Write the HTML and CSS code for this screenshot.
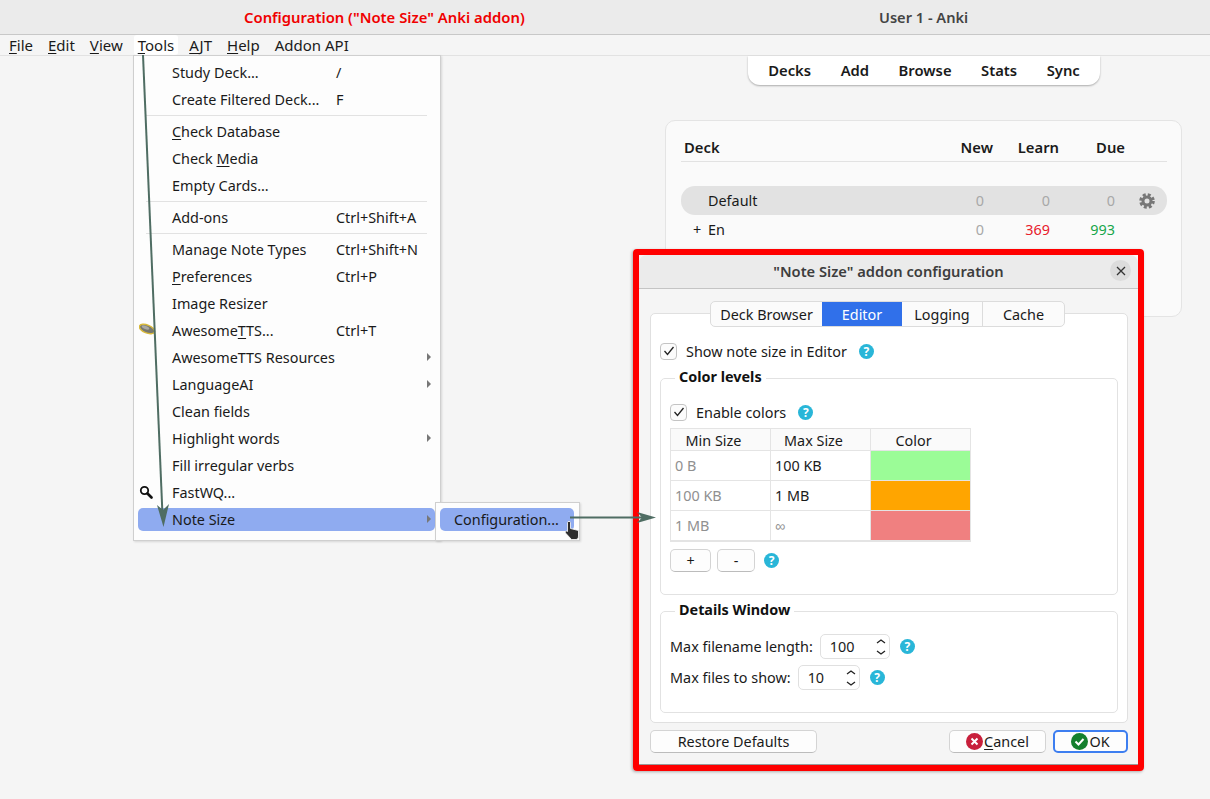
FILE: index.html
```html
<!DOCTYPE html>
<html lang="en">
<head>
    <meta charset="UTF-8">
    <title>User 1 - Anki</title>
    <link rel="stylesheet" href="styles.css">
</head>
<body>
    <header class="titlebar">
        <span class="note-title">Configuration ("Note Size" Anki addon)</span>
        <span class="app-title">User 1 - Anki</span>
    </header>
    <nav class="menubar">
        <span class="menubar-item"><u>F</u>ile</span>
        <span class="menubar-item"><u>E</u>dit</span>
        <span class="menubar-item"><u>V</u>iew</span>
        <span class="menubar-item active"><u>T</u>ools</span>
        <span class="menubar-item"><u>A</u>JT</span>
        <span class="menubar-item"><u>H</u>elp</span>
        <span class="menubar-item">Addon API</span>
    </nav>
    <main class="anki">
        <div class="toolbar">
            <span>Decks</span>
            <span>Add</span>
            <span>Browse</span>
            <span>Stats</span>
            <span>Sync</span>
        </div>
        <section class="decks">
            <div class="deck-row deck-head">
                <span class="deck-name">Deck</span>
                <span class="col-new">New</span>
                <span class="col-learn">Learn</span>
                <span class="col-due">Due</span>
            </div>
            <div class="deck-row deck-current">
                <span class="deck-name indent">Default</span>
                <span class="num col-new">0</span>
                <span class="num col-learn">0</span>
                <span class="num col-due">0</span>
                <svg class="gear" width="16" height="16" viewBox="0 0 16 16">
                    <circle cx="8" cy="8" r="6.3" fill="none" stroke="#777" stroke-width="3" stroke-dasharray="2.9 2.05"/>
                    <circle cx="8" cy="8" r="4" fill="none" stroke="#777" stroke-width="3"/>
                </svg>
            </div>
            <div class="deck-row">
                <span class="deck-name"><span class="expander">+</span>En</span>
                <span class="num col-new">0</span>
                <span class="num col-learn red">369</span>
                <span class="num col-due green">993</span>
            </div>
        </section>
    </main>

    <div class="menu">
        <div class="menu-item"><span class="label">Study Deck...</span><span>/</span></div>
        <div class="menu-item"><span class="label">Create Filtered Deck...</span><span>F</span></div>
        <hr>
        <div class="menu-item"><span class="label"><u>C</u>heck Database</span></div>
        <div class="menu-item"><span class="label">Check <u>M</u>edia</span></div>
        <div class="menu-item"><span class="label">Empty Cards...</span></div>
        <hr>
        <div class="menu-item"><span class="label">Add-ons</span><span>Ctrl+Shift+A</span></div>
        <hr>
        <div class="menu-item"><span class="label">Manage Note Types</span><span>Ctrl+Shift+N</span></div>
        <div class="menu-item"><span class="label"><u>P</u>references</span><span>Ctrl+P</span></div>
        <div class="menu-item"><span class="label">Image Resizer</span></div>
        <div class="menu-item">
            <svg class="menu-icon" width="18" height="14" viewBox="0 0 18 14">
                <ellipse cx="8" cy="6" rx="8" ry="4" transform="rotate(22 8 6)" fill="#77776f" stroke="#d8b93a" stroke-width="1.4"/>
                <ellipse cx="6.500" cy="4.500" rx="4" ry="1.600" transform="rotate(22 6.500 4.500)" fill="#a9a9a2"/>
            </svg>
            <span class="label">Awesome<u>T</u>TS...</span><span>Ctrl+T</span>
        </div>
        <div class="menu-item"><span class="label">AwesomeTTS Resources</span><i class="more"></i></div>
        <div class="menu-item"><span class="label">LanguageAI</span><i class="more"></i></div>
        <div class="menu-item"><span class="label">Clean fields</span></div>
        <div class="menu-item"><span class="label">Highlight words</span><i class="more"></i></div>
        <div class="menu-item"><span class="label">Fill irregular verbs</span></div>
        <div class="menu-item">
            <svg class="menu-icon" width="14" height="14" viewBox="0 0 14 14">
                <circle cx="5.500" cy="5.500" r="3.700" fill="#fff" stroke="#111" stroke-width="1.800"/>
                <path d="M8.500 8.500L12.500 12.500" stroke="#111" stroke-width="2.600" stroke-linecap="round"/>
            </svg>
            <span class="label">FastWQ...</span>
        </div>
        <div class="menu-item selected"><span class="label">Note Size</span><i class="more"></i></div>
    </div>
    <div class="submenu">
        <div class="menu-item selected"><span>Configuration...</span></div>
    </div>

    <div class="callout">
        <div class="dialog">
            <div class="dialog-title">
                <span>"Note Size" addon configuration</span>
                <span class="close">
                    <svg width="10" height="10" viewBox="0 0 10 10"><path d="M1 1L9 9M9 1L1 9" stroke="#333" stroke-width="1.300"/></svg>
                </span>
            </div>
            <div class="dialog-body">
                <div class="tabs">
                    <span class="tab">Deck Browser</span>
                    <span class="tab current">Editor</span>
                    <span class="tab">Logging</span>
                    <span class="tab">Cache</span>
                </div>
                <div class="pane">
                    <div class="check-row">
                        <span class="checkbox"><svg width="12" height="10" viewBox="0 0 12 10"><path d="M1.500 5L4.500 8.500L10.500 1" fill="none" stroke="#222" stroke-width="1.300"/></svg></span>
                        <span>Show note size in Editor</span>
                        <span class="help">?</span>
                    </div>
                    <fieldset class="group group-colors">
                        <legend>Color levels</legend>
                        <div class="check-row enable-row">
                            <span class="checkbox"><svg width="12" height="10" viewBox="0 0 12 10"><path d="M1.500 5L4.500 8.500L10.500 1" fill="none" stroke="#222" stroke-width="1.300"/></svg></span>
                            <span>Enable colors</span>
                            <span class="help">?</span>
                        </div>
                        <table class="levels">
                            <tr><th>Min Size</th><th>Max Size</th><th>Color</th></tr>
                            <tr><td class="dim">0 B</td><td>100 KB</td><td class="swatch swatch-green"></td></tr>
                            <tr><td class="dim">100 KB</td><td>1 MB</td><td class="swatch swatch-orange"></td></tr>
                            <tr><td class="dim">1 MB</td><td class="dim">∞</td><td class="swatch swatch-red"></td></tr>
                        </table>
                        <div class="row-buttons">
                            <span class="btn btn-plus">+</span>
                            <span class="btn btn-minus">-</span>
                            <span class="help">?</span>
                        </div>
                    </fieldset>
                    <fieldset class="group group-details">
                        <legend>Details Window</legend>
                        <div class="field">
                            <span>Max filename length:</span>
                            <span class="spin spin-wide">100
                                <svg width="12" height="20" viewBox="0 0 12 20"><path d="M2 6L6 3L10 6M2 14L6 17L10 14" fill="none" stroke="#222" stroke-width="1.300"/></svg>
                            </span>
                            <span class="help">?</span>
                        </div>
                        <div class="field">
                            <span>Max files to show:</span>
                            <span class="spin">10
                                <svg width="12" height="20" viewBox="0 0 12 20"><path d="M2 6L6 3L10 6M2 14L6 17L10 14" fill="none" stroke="#222" stroke-width="1.300"/></svg>
                            </span>
                            <span class="help">?</span>
                        </div>
                    </fieldset>
                </div>
                <div class="dialog-buttons">
                    <span class="btn btn-restore">Restore Defaults</span>
                    <span class="btn btn-cancel">
                        <svg width="17" height="17" viewBox="0 0 17 17"><circle cx="8.500" cy="8.500" r="8.500" fill="#c8203c"/><path d="M5.500 5.500L11.500 11.500M11.500 5.500L5.500 11.500" stroke="#fff" stroke-width="2"/></svg>
                        <span><u>C</u>ancel</span>
                    </span>
                    <span class="btn btn-ok">
                        <svg width="17" height="17" viewBox="0 0 17 17"><circle cx="8.500" cy="8.500" r="8.500" fill="#14802e"/><path d="M4.500 8.500L7.500 11.500L12.500 6" fill="none" stroke="#fff" stroke-width="2"/></svg>
                        <span>OK</span>
                    </span>
                </div>
            </div>
        </div>
    </div>

    <!-- annotation arrows and mouse pointer drawn over the screenshot -->
    <svg class="arrows" width="1210" height="799" viewBox="0 0 1210 799">
        <path d="M143 55L162.500 515" fill="none" stroke="#4f6d63" stroke-width="2"/>
        <path d="M163.500 527L157 505L163 510L169 504Z" fill="#4f6d63"/>
        <path d="M570 517.500L645 517.500" fill="none" stroke="#4f6d63" stroke-width="2"/>
        <path d="M656 517.500L637 512L642 517.500L637 523Z" fill="#4f6d63"/>
        <path d="M567.500 522.500C567.500 521 570.500 521 570.500 522.500V528.500L578.500 530.500V536C578.500 538 577.500 539.500 576 539.500H571.500L565.500 533C564.500 531.500 566 530.500 567.500 531.500Z" fill="#2e2e2e" stroke="#fff" stroke-width="0.800"/>
    </svg>
</body>
</html>
```
FILE: styles.css
```css
* {
    box-sizing: border-box;
}
body {
    font-family: "Noto Sans", sans-serif;
    font-size: 14.4px;
    margin: 0;
    width: 1210px;
    height: 799px;
    overflow: hidden;
    position: relative;
    background-color: #f5f5f5;
    color: #1a1a1a;
}
u {
    text-underline-offset: 2px;
}

/* window chrome */
.titlebar {
    height: 35px;
    background-color: #ebebeb;
    border-bottom: 1px solid #c8c8c8;
    display: flex;
    align-items: center;
    padding-left: 244px;
}
.note-title {
    width: 635px;
    color: #f00000;
    font-size: 14.850px;
    font-weight: 600;
}
.app-title {
    color: #444;
    font-size: 14.6px;
    font-weight: 600;
}
.menubar {
    height: 21px;
    border-bottom: 1px solid #e2e2e2;
    display: flex;
    align-items: center;
    padding-left: 5px;
    gap: 7px;
    font-size: 15px;
}
.menubar-item {
    padding: 0 4px;
    height: 20px;
    line-height: 20px;
    border-radius: 3px;
}
.menubar-item.active {
    background-color: #fff;
}

/* deck browser */
.anki {
    padding-left: 665px;
}
.toolbar {
    margin-left: 83px;
    width: 352px;
    height: 29px;
    padding-bottom: 2px;
    background-color: #fff;
    border-radius: 0 0 12px 12px;
    box-shadow: 0 1px 2px rgba(0,0,0,0.3);
    display: flex;
    align-items: center;
    justify-content: center;
    gap: 29.500px;
    font-size: 14.800px;
    font-weight: 600;
}
.decks {
    margin-top: 35px;
    width: 517px;
    height: 197px;
    padding: 13px 15px;
    background-color: #fafafa;
    border: 1px solid #e4e4e4;
    border-radius: 10px;
}
.deck-row {
    display: flex;
    align-items: center;
    height: 29px;
    width: 486px;
    position: relative;
}
.deck-name {
    padding-left: 3px;
    flex: 1;
}
.deck-name.indent {
    padding-left: 27px;
}
.expander {
    display: inline-block;
    width: 24px;
    padding-left: 9px;
}
.deck-head {
    font-weight: 600;
    font-size: 14.800px;
    border-bottom: 1px solid #e2e2e2;
    margin-bottom: 24px;
    height: 28px;
    padding-bottom: 2px;
}
.deck-current {
    background-color: #e2e2e2;
    border-radius: 14px;
}
.col-new, .col-learn, .col-due {
    text-align: right;
}
.col-new {
    width: 32px;
}
.col-learn {
    width: 66px;
}
.col-due {
    width: 65px;
    margin-right: 52px;
}
.deck-head .col-new {
    width: 42px;
}
.deck-head .col-learn {
    width: 66px;
}
.deck-head .col-due {
    width: 66px;
    margin-right: 42px;
}
.num {
    color: #a8a8a8;
}
.red {
    color: #e8202c;
}
.green {
    color: #18a64a;
}
.gear {
    position: absolute;
    right: 12px;
    top: 7px;
}

/* tools menu */
.menu, .submenu {
    position: absolute;
    background-color: #fdfdfd;
    border: 1px solid #cfcfcf;
    box-shadow: 1px 1px 2px rgba(0,0,0,0.12);
}
.menu {
    left: 133px;
    top: 55px;
    width: 308px;
    height: 486px;
    padding: 3px 4px;
}
.submenu {
    left: 435px;
    top: 502px;
    width: 145px;
    height: 39px;
    padding: 5px 4px;
}
.menu-item {
    height: 27px;
    display: flex;
    align-items: center;
    padding-left: 34px;
    position: relative;
}
.menu-item .label {
    width: 164px;
    white-space: nowrap;
}
.menu-item.selected {
    height: 23px;
    margin-top: 2px;
    background-color: #8fabf0;
    border-radius: 5px;
    width: 297px;
}
.submenu .menu-item.selected {
    margin-top: 0;
    width: 134px;
    padding-left: 14px;
}
.menu hr {
    height: 1px;
    border: 0;
    margin: 2px 9px 2px 8px;
    background-color: #e2e2e2;
}
.menu-icon {
    position: absolute;
    left: 1px;
    top: 6px;
}
.more {
    position: absolute;
    left: 289px;
    top: 9px;
    border-left: 4px solid #777;
    border-top: 4px solid transparent;
    border-bottom: 4px solid transparent;
}
.selected .more {
    top: 7px;
}

/* addon dialog with the red annotation box */
.callout {
    position: absolute;
    left: 633px;
    top: 249px;
    width: 511px;
    height: 522px;
    border: 6px solid #ff0000;
    border-radius: 4px;
    box-shadow: -1px 1px 3px rgba(0,0,0,0.3);
}
.dialog {
    height: 100%;
    background-color: #f5f5f5;
    border-radius: 8px 8px 0 0;
    border-bottom: 1px solid #999;
}
.dialog-title {
    height: 34px;
    padding-bottom: 1px;
    background-color: #ebebeb;
    border-radius: 8px 8px 0 0;
    border-bottom: 1px solid #c4c4c4;
    display: flex;
    align-items: center;
    justify-content: center;
    font-size: 14.700px;
    font-weight: 600;
    color: #3d3d3d;
    position: relative;
}
.close {
    position: absolute;
    right: 7px;
    top: 5px;
    width: 21px;
    height: 21px;
    background-color: #dcdcdc;
    border-radius: 50%;
    display: flex;
    align-items: center;
    justify-content: center;
}
.dialog-body {
    padding: 12px 10px 0 11px;
    position: relative;
}
.tabs {
    display: flex;
    width: 355px;
    height: 26px;
    margin-left: 60px;
    position: relative;
    background-color: #fbfbfb;
    border: 1px solid #dcdcdc;
    border-radius: 5px;
    margin-bottom: -14px;
}
.tab {
    width: 81px;
    text-align: center;
    line-height: 25px;
    border-right: 1px solid #dcdcdc;
}
.tab:first-child {
    width: 111px;
    border-right: 0;
}
.tab.current {
    width: 80px;
    border-right: 0;
    background-color: #3070ea;
    color: #fff;
}
.tab:last-child {
    flex: 1;
    border-right: 0;
}
.pane {
    height: 410px;
    background-color: #fff;
    border: 1px solid #e0e0e0;
    border-radius: 5px;
    padding: 25px 9px 0 9px;
}
.check-row {
    display: flex;
    align-items: center;
    height: 24px;
    gap: 9px;
}
.checkbox {
    width: 17px;
    height: 17px;
    background-color: #fcfcfc;
    border: 1px solid #c4c4c4;
    border-radius: 4px;
    display: flex;
    align-items: center;
    justify-content: center;
}
.help {
    width: 15px;
    height: 15px;
    border-radius: 50%;
    background-color: #29b6d8;
    color: #fff;
    font-size: 12px;
    font-weight: 700;
    line-height: 15px;
    text-align: center;
    margin-left: 3px;
}
.group {
    margin: 0;
    padding: 0 9px;
    border: 1px solid #e2e2e2;
    border-radius: 5px;
    min-width: 0;
}
.group legend {
    margin-left: 5px;
    padding: 0 4px 3px 4px;
    font-weight: 700;
    color: #111;
    line-height: 19px;
}
.group-colors {
    height: 228px;
    margin-top: 4px;
}
.group-details {
    height: 113px;
    margin-top: 5px;
}
.enable-row {
    margin-top: 11px;
}
.levels {
    border-collapse: collapse;
    margin-top: 4px;
    table-layout: fixed;
    width: 301px;
}
.levels th, .levels td {
    width: 100px;
    border: 1px solid #e4e4e4;
    padding: 0 4px;
    font-weight: 400;
}
.levels th {
    height: 22px;
    background-color: #fafafa;
    text-align: center;
    padding: 1px 18px 0 4px;
}
.levels td {
    height: 30px;
}
.levels tr:last-child td {
    border-bottom-width: 2px;
}
.dim {
    color: #909090;
}
.swatch-green {
    background-color: #9bfc97;
}
.swatch-orange {
    background-color: #ffa500;
}
.swatch-red {
    background-color: #f08080;
}
.btn {
    background-color: #fdfdfd;
    border: 1px solid #d4d4d4;
    border-bottom-color: #bcbcbc;
    border-radius: 5px;
    height: 23px;
    display: flex;
    align-items: center;
    justify-content: center;
}
.row-buttons {
    display: flex;
    align-items: center;
    gap: 6px;
    margin-top: 7px;
}
.btn-plus {
    width: 41px;
}
.btn-minus {
    width: 38px;
}
.field {
    display: flex;
    align-items: center;
    gap: 7px;
    height: 25px;
    margin-bottom: 6px;
}
.group-details .field:first-of-type {
    margin-top: 12px;
}
.spin {
    width: 62px;
    height: 25px;
    background-color: #fff;
    border: 1px solid #e0e0e0;
    border-radius: 5px;
    display: flex;
    align-items: center;
    justify-content: space-between;
    padding: 0 2px 0 9px;
}
.spin-wide {
    width: 70px;
}
.dialog-buttons {
    display: flex;
    margin-top: 7px;
    gap: 7px;
}
.btn-restore {
    width: 167px;
    margin-right: 125px;
}
.btn-cancel {
    width: 97px;
    gap: 1px;
}
.btn-ok {
    width: 75px;
    gap: 1px;
    border: 2px solid #3d7ef0;
}

.arrows {
    position: absolute;
    left: 0;
    top: 0;
    pointer-events: none;
}
```
